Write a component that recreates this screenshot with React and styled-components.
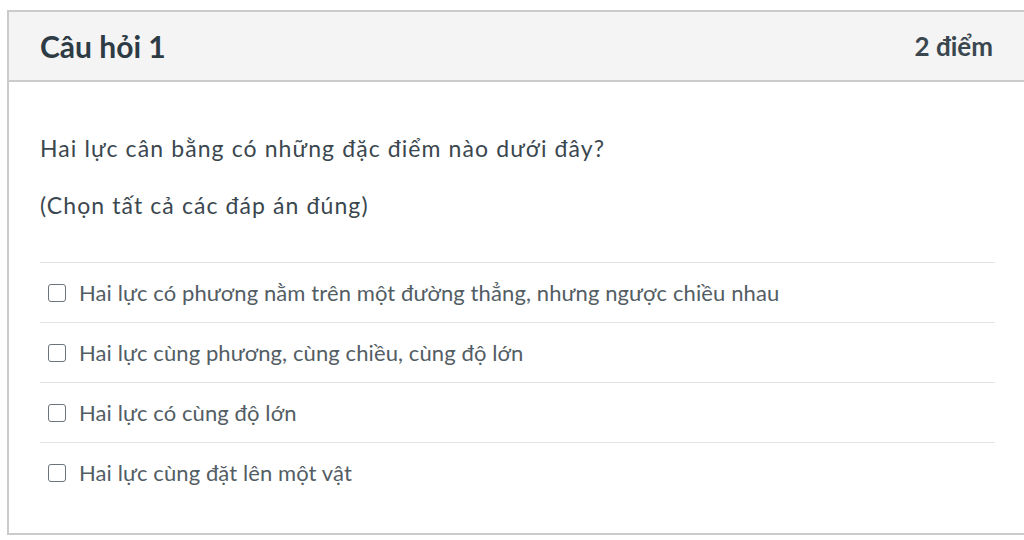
import React from 'react';
import styled, { createGlobalStyle } from 'styled-components';

const Global = createGlobalStyle`
  body {
    margin: 0;
    background: #fff;
    font-family: Lato, "Noto Sans", sans-serif;
  }
`;

const Page = styled.div`
  padding: 10px 0 0 7px;
`;

const Card = styled.div`
  width: 1040px;
  height: 525px;
  box-sizing: border-box;
  border: 2px solid #cbcbcb;
  border-right: none;
  background: #fff;
`;

const Header = styled.div`
  height: 70px;
  box-sizing: border-box;
  background: #f4f4f4;
  border-bottom: 2px solid #cbcbcb;
  display: flex;
  align-items: center;
  justify-content: space-between;
  padding: 0 54px 0 31px;
`;

const Title = styled.h2`
  margin: 0;
  font-size: 30px;
  font-weight: 700;
  color: #2d3b45;
`;

const Points = styled.span`
  font-size: 26px;
  font-weight: 700;
  color: #3b474f;
`;

const Body = styled.div`
  padding: 50px 52px 0 31px;
`;

const Question = styled.p`
  margin: 0 0 25px;
  font-size: 23px;
  line-height: 32px;
  letter-spacing: 1.1px;
  color: #3b474f;
`;

const Options = styled.div`
  margin-top: 41px;
  border-top: 1px solid #e3e3e3;
`;

const Option = styled.label`
  height: 59px;
  display: flex;
  align-items: center;
  gap: 13px;
  padding-left: 8px;
  border-bottom: ${p => (p.last ? 'none' : '1px solid #e3e3e3')};
  font-size: 22px;
  letter-spacing: 0.1px;
  color: #535d64;
`;

const Box = styled.span`
  width: 18px;
  height: 18px;
  box-sizing: border-box;
  border: 1.5px solid #6b747a;
  border-radius: 3px;
  flex-shrink: 0;
`;

const answers = [
  'Hai lực có phương nằm trên một đường thẳng, nhưng ngược chiều nhau',
  'Hai lực cùng phương, cùng chiều, cùng độ lớn',
  'Hai lực có cùng độ lớn',
  'Hai lực cùng đặt lên một vật',
];

export default function App() {
  return (
    <Page>
      <Global />
      <Card>
        <Header>
          <Title>Câu hỏi 1</Title>
          <Points>2 điểm</Points>
        </Header>
        <Body>
          <Question>Hai lực cân bằng có những đặc điểm nào dưới đây?</Question>
          <Question>(Chọn tất cả các đáp án đúng)</Question>
          <Options>
            {answers.map((a, i) => (
              <Option key={i} last={i === answers.length - 1}>
                <Box />
                {a}
              </Option>
            ))}
          </Options>
        </Body>
      </Card>
    </Page>
  );
}
